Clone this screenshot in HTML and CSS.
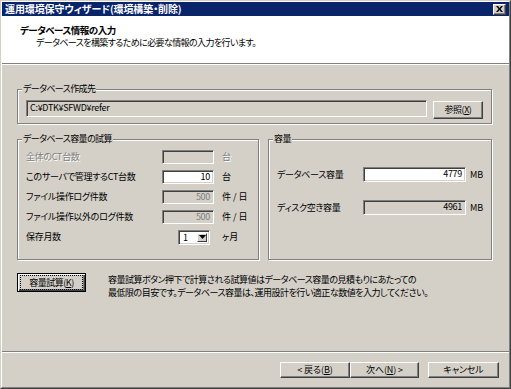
FILE: index.html
```html
<!DOCTYPE html>
<html lang="ja">
<head>
<meta charset="utf-8">
<title>運用環境保守ウィザード</title>
<link rel="stylesheet" href="styles.css">
</head>
<body>
<div class="window">
  <div class="frame">
    <div class="titlebar">
      <span class="title">運用環境保守ウィザード(環境構築・削除)</span>
      <span class="close"><svg width="7" height="6" viewBox="0 0 7 6"><path d="M0 0h2l1.5 2 1.5-2h2l-2.5 3 2.5 3h-2l-1.5-2-1.5 2h-2l2.5-3z" fill="#000"/></svg></span>
    </div>
    <div class="header">
      <div class="h-title">データベース情報の入力</div>
      <div class="h-sub">データベースを構築するために必要な情報の入力を行います。</div>
    </div>
    <div class="body">
      <div class="group g-path">
        <span class="legend">データベース作成先</span>
        <div class="path-row">
          <div class="field ro path">C:¥DTK¥SFWD¥refer</div>
          <button class="btn browse">参照(<u>X</u>)</button>
        </div>
      </div>
      <div class="groups">
        <div class="group g-calc">
          <span class="legend">データベース容量の試算</span>
          <div class="calc-grid">
            <span class="lbl disabled">全体のCT台数</span>
            <div class="field ro num"></div>
            <span class="unit disabled">台</span>

            <span class="lbl">このサーバで管理するCT台数</span>
            <div class="field num">10</div>
            <span class="unit">台</span>

            <span class="lbl">ファイル操作ログ件数</span>
            <div class="field ro num gray">500</div>
            <span class="unit">件 / 日</span>

            <span class="lbl">ファイル操作以外のログ件数</span>
            <div class="field ro num gray">500</div>
            <span class="unit">件 / 日</span>

            <span class="lbl">保存月数</span>
            <div class="select"><span class="sel-val">1</span><span class="sel-btn"><svg width="7" height="4" viewBox="0 0 7 4"><path d="M0 0h7l-3.5 4z" fill="#000"/></svg></span></div>
            <span class="unit">ヶ月</span>
          </div>
        </div>
        <div class="group g-cap">
          <span class="legend">容量</span>
          <div class="cap-grid">
            <span class="lbl">データベース容量</span>
            <div class="field num">4779</div>
            <span class="unit">MB</span>

            <span class="lbl">ディスク空き容量</span>
            <div class="field ro num">4961</div>
            <span class="unit">MB</span>
          </div>
        </div>
      </div>
      <div class="calc-row">
        <button class="btn default"><span class="focus">容量試算(<u>K</u>)</span></button>
        <p class="note">容量試算ボタン押下で計算される試算値はデータベース容量の見積もりにあたっての<br>最低限の目安です。データベース容量は、運用設計を行い適正な数値を入力してください。</p>
      </div>
    </div>
    <div class="footer">
      <button class="btn nav">&lt; 戻る(<u>B</u>)</button>
      <button class="btn nav">次へ(<u>N</u>) &gt;</button>
      <button class="btn nav cancel">キャンセル</button>
    </div>
  </div>
</div>
</body>
</html>
```
FILE: styles.css
```css
* { box-sizing: border-box; }
html, body { margin: 0; padding: 0; }
body {
  width: 511px;
  height: 389px;
  overflow: hidden;
  font-family: "Noto Sans CJK JP", "Liberation Sans", sans-serif;
  font-size: 9px;
  letter-spacing: -0.6px;
  font-feature-settings: "palt";
  color: #000;
  background: #d4d0c8;
}
.window {
  width: 511px;
  height: 389px;
  border: 1px solid;
  border-color: #d4d0c8 #404040 #404040 #d4d0c8;
}
.frame {
  height: 100%;
  border: 1px solid;
  border-color: #fff #808080 #808080 #fff;
  display: flex;
  flex-direction: column;
  background: #d4d0c8;
}
.titlebar {
  height: 14px;
  background: #0a246a;
  color: #fff;
  display: flex;
  align-items: center;
  justify-content: space-between;
  padding: 0 3px 0 3px;
}
.title { font-weight: bold; font-size: 10px; letter-spacing: -0.1px; line-height: 14px; }
.close {
  width: 13px;
  height: 11px;
  background: #d4d0c8;
  border: 1px solid;
  border-color: #fff #404040 #404040 #fff;
  box-shadow: inset -1px -1px 0 #808080;
  display: flex;
  align-items: center;
  justify-content: center;
}
.header {
  height: 48px;
  background: #fff;
  border-bottom: 1px solid #808080;
  box-shadow: 0 1px 0 #fff;
  padding: 9px 0 0 18px;
}
.h-title { font-weight: bold; font-size: 9.5px; letter-spacing: -0.5px; line-height: 11px; }
.h-sub { padding-left: 16px; line-height: 12px; margin-top: 1px; }
.body {
  flex: 1;
  padding: 25px 17px 0 15px;
}
.group {
  position: relative;
  border: 1px solid #808080;
  box-shadow: inset 1px 1px 0 #fff, 1px 1px 0 #fff;
}
.legend {
  position: absolute;
  top: -7px;
  left: 4px;
  padding: 0 1px;
  background: #d4d0c8;
  line-height: 12px;
}
.g-path {
  height: 35px;
  padding: 10px 8px 0 8px;
}
.path-row { display: flex; gap: 6px; align-items: flex-start; }
.field {
  height: 17px;
  background: #fff;
  border: 1px solid;
  border-color: #808080 #fff #fff #808080;
  box-shadow: inset 1px 1px 0 #404040, inset -1px -1px 0 #d4d0c8;
  line-height: 14px;
  padding: 0 3px;
  white-space: nowrap;
}
.field.ro { background: #d4d0c8; }
.path { flex: 1; letter-spacing: -0.3px; }
.num { text-align: right; letter-spacing: -0.3px; }
.gray { color: #808080; }
.btn {
  font: inherit;
  letter-spacing: -0.5px;
  color: #000;
  background: #d4d0c8;
  border: 1px solid;
  border-color: #fff #404040 #404040 #fff;
  box-shadow: inset -1px -1px 0 #808080;
  padding: 0;
  line-height: 14px;
  text-align: center;
}
.browse { width: 50px; height: 18px; margin-top: 1px; }
.groups {
  display: flex;
  gap: 9px;
  margin-top: 15px;
}
.g-calc { width: 242px; height: 121px; padding: 10px 0 0 8px; }
.g-cap { width: 224px; height: 121px; padding: 27px 0 0 8px; }
.calc-grid {
  display: grid;
  grid-template-columns: 128px 52px auto;
  grid-auto-rows: 14px;
  row-gap: 6px;
  column-gap: 8px;
  align-items: center;
}
.calc-grid .field { height: 14px; line-height: 11px; }
.cap-grid {
  display: grid;
  grid-template-columns: 82px 103px auto;
  grid-auto-rows: 15px;
  row-gap: 18px;
  column-gap: 4px;
  align-items: center;
}
.cap-grid .field { height: 15px; line-height: 12px; }
.lbl, .unit { white-space: nowrap; line-height: 12px; }
.lbl { letter-spacing: -0.3px; }
.unit { letter-spacing: 0; }
.disabled { color: #808080; text-shadow: 1px 1px 0 #fff; }
.select {
  justify-self: end;
  margin-right: 4px;
  width: 32px;
  height: 15px;
  background: #fff;
  border: 1px solid;
  border-color: #808080 #fff #fff #808080;
  box-shadow: inset 1px 1px 0 #404040, inset -1px -1px 0 #d4d0c8;
  display: flex;
  align-items: stretch;
  padding: 2px 2px 2px 2px;
}
.sel-val { flex: 1; line-height: 10px; padding-left: 2px; }
.sel-btn {
  width: 10px;
  background: #d4d0c8;
  border: 1px solid;
  border-color: #fff #404040 #404040 #fff;
  display: flex;
  align-items: center;
  justify-content: center;
}
.calc-row {
  display: flex;
  align-items: flex-start;
  gap: 22px;
  margin-top: 13px;
}
.btn.default {
  width: 69px;
  height: 19px;
  border: 1px solid #000;
  box-shadow: inset 1px 1px 0 #fff, inset -1px -1px 0 #404040, inset -2px -2px 0 #808080;
  padding: 2px 3px;
  display: flex;
}
.focus {
  flex: 1;
  outline: 1px dotted #000;
  line-height: 13px;
}
.note {
  margin: 0;
  line-height: 13px;
  white-space: nowrap;
  letter-spacing: -0.5px;
}
.footer {
  border-top: 1px solid #808080;
  box-shadow: inset 0 1px 0 #fff;
  padding: 10px 10px 9px 0;
  display: flex;
  justify-content: flex-end;
}
.nav { width: 69px; height: 16px; letter-spacing: -0.1px; }
.nav:first-child { width: 70px; }
.cancel { width: 71px; margin-left: 9px; }
```
